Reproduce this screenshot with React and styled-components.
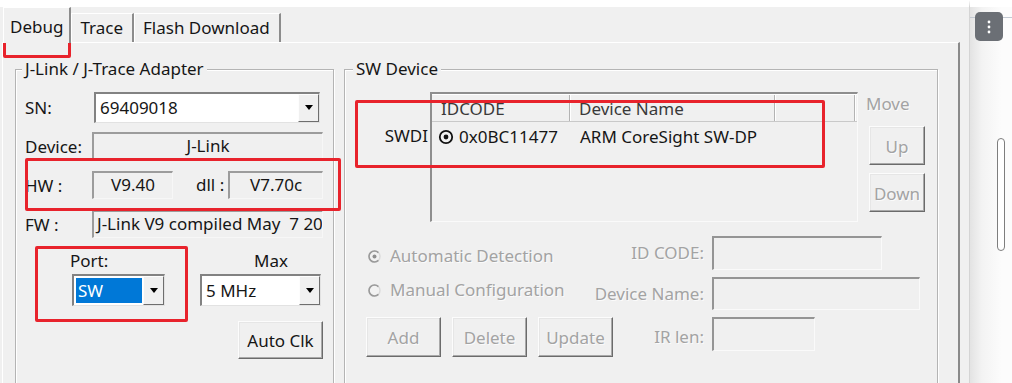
import React from 'react';
import styled, { createGlobalStyle } from 'styled-components';

const GlobalStyle = createGlobalStyle`
  html, body {
    margin: 0;
    padding: 0;
    background: #fff;
  }
  body {
    font-family: "Noto Sans", "Open Sans", "DejaVu Sans", sans-serif;
    font-size: 17px;
    color: #161616;
  }
  * { box-sizing: border-box; }
`;

const Screen = styled.div`
  position: relative;
  width: 1012px;
  height: 383px;
  display: flex;
  overflow: hidden;
  background: #fff;
`;

const Dialog = styled.div`
  width: 969px;
  flex: none;
  display: flex;
  flex-direction: column;
  border-top: 7px solid #fff;
  background: #f0f0f0;
`;

const TabBar = styled.div`
  display: flex;
  align-items: flex-end;
  height: 36px;
  padding-left: 3px;
`;

const Tab = styled.div`
  position: relative;
  z-index: ${p => (p.$active ? 2 : 1)};
  height: ${p => (p.$active ? 36 : 29)}px;
  margin-bottom: ${p => (p.$active ? -1 : 0)}px;
  padding: ${p => (p.$active ? '0 6px 6px 6px' : '0 9px 4px 8px')};
  display: flex;
  align-items: flex-end;
  line-height: 20px;
  background: #f0f0f0;
  border-top: 1px solid #fff;
  border-left: 1px solid #fff;
  border-right: 2px solid #8c8c8c;
`;

const TabPage = styled.div`
  flex: 1;
  margin: 0 9px 0 2px;
  border-top: 1px solid #fff;
  border-left: 1px solid #fff;
  border-right: 2px solid #8a8a8a;
  padding: 17px 0 0 12px;
  display: flex;
  gap: 10px;
  align-items: flex-start;
`;

const Group = styled.fieldset`
  width: ${p => p.$w}px;
  height: 340px;
  margin: 0;
  padding: 0;
  min-width: 0;
  border: 1px solid #b4b4b4;
  box-shadow: inset 1px 1px #fff, 1px 1px #fff;
`;

const GroupTitle = styled.legend`
  margin-left: ${p => p.$indent}px;
  padding: 0 3px;
  line-height: 18px;
  background: #f0f0f0;
`;

const GroupBody = styled.div`
  padding: 14px 10px 0 9px;
`;

const FieldGrid = styled.div`
  display: grid;
  grid-template-columns: 67px 1fr;
  grid-auto-rows: 30px;
  row-gap: 9px;
  align-items: center;
`;

const Label = styled.span`
  line-height: 20px;
  white-space: nowrap;
  color: ${p => (p.$disabled ? '#a3a3a3' : '#161616')};
  text-shadow: ${p => (p.$disabled ? '1px 1px #fbfbfb' : 'none')};
`;

const RowLabel = styled(Label)`
  padding-top: 2px;
`;

const InlineRow = styled.div`
  display: flex;
  align-items: center;
  height: 100%;
`;

const InlineLabel = styled(Label)`
  margin: 0 4px 0 ${p => p.$gap}px;
`;

const ReadOnly = styled.div`
  height: 28px;
  width: ${p => (p.$w ? `${p.$w}px` : 'auto')};
  flex: ${p => (p.$w ? 'none' : 1)};
  border-style: solid;
  border-width: 2px 1px 1px 2px;
  border-color: #9c9c9c #f7f7f7 #f7f7f7 #9c9c9c;
  padding: 0 3px;
  line-height: 24px;
  text-align: ${p => (p.$left ? 'left' : 'center')};
  white-space: pre;
  overflow: hidden;
`;

const Combo = styled.div`
  display: flex;
  width: ${p => p.$w}px;
  height: ${p => p.$h}px;
  margin-left: ${p => p.$ml || 0}px;
  background: #fff;
  border-style: solid;
  border-width: 2px 1px 1px 2px;
  border-color: #828282 #e2e2e2 #e2e2e2 #828282;
`;

const ComboText = styled.div`
  flex: 1;
  padding-left: 4px;
  display: flex;
  align-items: center;
`;

const ComboSelected = styled.div`
  flex: 1;
  margin: 2px 1px 2px 2px;
  padding-left: 2px;
  display: flex;
  align-items: center;
  background: #0078d7;
  color: #fff;
`;

const DropButton = styled.div`
  width: 21px;
  flex: none;
  display: flex;
  align-items: center;
  justify-content: center;
  background: #f0f0f0;
  border: 1px solid;
  border-color: #fdfdfd #6e6e6e #6e6e6e #fdfdfd;
  &::after {
    content: "";
    border-top: 5px solid #000;
    border-left: 4px solid transparent;
    border-right: 4px solid transparent;
  }
`;

const ClockRow = styled.div`
  display: flex;
  gap: 35px;
  margin: 12px 0 0 47px;
`;

const ClockCol = styled.div`
  display: flex;
  flex-direction: column;
  gap: 3px;
`;

const ClockLabel = styled(Label)`
  margin-left: ${p => p.$ml}px;
`;

const ButtonRow = styled.div`
  display: flex;
  justify-content: ${p => (p.$start ? 'flex-start' : 'flex-end')};
  gap: 11px;
  margin-top: ${p => p.$mt || 0}px;
`;

const Button = styled.div`
  width: ${p => p.$w}px;
  height: ${p => p.$h}px;
  flex: none;
  display: flex;
  align-items: center;
  justify-content: center;
  padding-top: 1px;
  background: #f0f0f0;
  border: 1px solid;
  border-color: #fcfcfc #6b6b6b #6b6b6b #fcfcfc;
  box-shadow: inset -1px -1px #a9a9a9, inset 1px 1px #e6e6e6;
  color: ${p => (p.$disabled ? '#a3a3a3' : '#161616')};
  text-shadow: ${p => (p.$disabled ? '1px 1px #fbfbfb' : 'none')};
  margin-top: ${p => p.$mt || 0}px;
  margin-left: ${p => p.$ml || 0}px;
`;

const DeviceTop = styled.div`
  display: flex;
  align-items: flex-start;
`;

const ScanLabel = styled(Label)`
  width: 76px;
  flex: none;
  text-align: right;
  padding-right: 2px;
  margin-top: 34px;
`;

const ListView = styled.div`
  width: 428px;
  height: 130px;
  flex: none;
  border-style: solid;
  border-width: 2px 1px 1px 2px;
  border-color: #8e8e8e #fafafa #fafafa #8e8e8e;
`;

const HeaderRow = styled.div`
  display: flex;
  height: 28px;
  border-top: 1px solid #fff;
  border-bottom: 1px solid #c9c9c9;
`;

const HeaderCell = styled.div`
  width: ${p => p.$w}px;
  flex: none;
  padding-left: 9px;
  line-height: 28px;
  color: #3a3a3a;
  border-right: 1px solid #b3b3b3;
  box-shadow: 1px 0 #fff;
`;

const DataRow = styled.div`
  display: flex;
  margin-top: 3px;
  line-height: 24px;
`;

const DataCell = styled.div`
  width: ${p => p.$w}px;
  flex: none;
  display: flex;
  align-items: center;
  gap: 5px;
  padding-left: ${p => p.$pl}px;
`;

const MoveCol = styled.div`
  display: flex;
  flex-direction: column;
  margin-left: 8px;
  padding-top: 2px;
`;

const LowerGrid = styled.div`
  display: grid;
  grid-template-columns: 226px 120px auto;
  grid-template-rows: 34px 33px 40px;
  row-gap: 7px;
  margin: 14px 0 0 12px;
`;

const RadioLine = styled.div`
  display: flex;
  align-items: center;
  gap: 9px;
  align-self: start;
  margin: ${p => p.$mt}px 0 0 2px;
  line-height: 20px;
  white-space: nowrap;
  color: #a3a3a3;
  text-shadow: 1px 1px #fbfbfb;
`;

const FormLabel = styled(Label)`
  text-align: right;
  padding-right: 8px;
  align-self: center;
`;

const EditBox = styled.div`
  width: ${p => p.$w}px;
  height: ${p => p.$h}px;
  align-self: start;
  border-style: solid;
  border-width: 2px 1px 1px 2px;
  border-color: #959595 #fafafa #fafafa #959595;
`;

const SideStrip = styled.div`
  flex: 1;
  display: flex;
  flex-direction: column;
  border-top: 7px solid #fff;
  border-left: 1px solid #d4d4d4;
  background:
    linear-gradient(#c3cad3, #c3cad3) 0 10px / 100% 1px no-repeat,
    linear-gradient(to right, #e3e3e3, #f3f3f3 12px, #fcfcfc 32px);
`;

const MenuButton = styled.div`
  width: 28px;
  height: 29px;
  margin: 5px 0 0 5px;
  border-radius: 5px;
  background: #6b6f75;
  display: flex;
  align-items: center;
  justify-content: center;
`;

const ScrollThumb = styled.div`
  width: 8px;
  height: 113px;
  margin: 97px 0 0 27px;
  border: 1px solid #7e7e7e;
  border-radius: 4px;
  background: #fff;
`;

const Mark = styled.div`
  position: absolute;
  left: ${p => p.$x}px;
  top: ${p => p.$y}px;
  width: ${p => p.$w}px;
  height: ${p => p.$h}px;
  border: 3px solid #e8232c;
  border-radius: 2px;
  pointer-events: none;
`;

const TargetIcon = () => (
  <svg width="16" height="16" viewBox="0 0 16 16">
    <circle cx="8" cy="8" r="6.2" fill="none" stroke="#111" strokeWidth="1.8" />
    <circle cx="8" cy="8" r="2.4" fill="#111" />
  </svg>
);

const RadioIcon = ({ checked }) => (
  <svg width="13" height="13" viewBox="0 0 13 13">
    <circle cx="6.5" cy="6.5" r="5.5" fill="#f2f2f2" stroke="#dadada" strokeWidth="1.4" />
    <path d="M10.4 2.6 A5.5 5.5 0 1 0 10.4 10.4" fill="none" stroke="#9a9a9a" strokeWidth="1.6" />
    {checked && <circle cx="6.5" cy="6.5" r="2" fill="#8f8f8f" />}
  </svg>
);

const Dots = () => (
  <svg width="4" height="14" viewBox="0 0 4 14">
    <circle cx="2" cy="2" r="1.4" fill="#fff" />
    <circle cx="2" cy="7" r="1.4" fill="#fff" />
    <circle cx="2" cy="12" r="1.4" fill="#fff" />
  </svg>
);

const AdapterGroup = () => (
  <Group $w={319}>
    <GroupTitle $indent={6}>J-Link / J-Trace Adapter</GroupTitle>
    <GroupBody>
      <FieldGrid>
        <RowLabel>SN:</RowLabel>
        <Combo $w={226} $h={31} $ml={2}>
          <ComboText>69409018</ComboText>
          <DropButton />
        </Combo>

        <RowLabel>Device:</RowLabel>
        <ReadOnly>J-Link</ReadOnly>

        <RowLabel>HW :</RowLabel>
        <InlineRow>
          <ReadOnly $w={81}>V9.40</ReadOnly>
          <InlineLabel $gap={23}>dll :</InlineLabel>
          <ReadOnly>V7.70c</ReadOnly>
        </InlineRow>

        <RowLabel>FW :</RowLabel>
        <ReadOnly $left>J-Link V9 compiled May  7 2021 10:12:36</ReadOnly>
      </FieldGrid>

      <ClockRow>
        <ClockCol>
          <ClockLabel $ml={-2}>Port:</ClockLabel>
          <Combo $w={93} $h={32}>
            <ComboSelected>SW</ComboSelected>
            <DropButton />
          </Combo>
        </ClockCol>
        <ClockCol>
          <ClockLabel $ml={54}>Max</ClockLabel>
          <Combo $w={121} $h={32}>
            <ComboText>5 MHz</ComboText>
            <DropButton />
          </Combo>
        </ClockCol>
      </ClockRow>

      <ButtonRow $mt={15}>
        <Button $w={85} $h={38}>Auto Clk</Button>
      </ButtonRow>
    </GroupBody>
  </Group>
);

const SwDeviceGroup = () => (
  <Group $w={594}>
    <GroupTitle $indent={8}>SW Device</GroupTitle>
    <GroupBody>
      <DeviceTop>
        <ScanLabel>SWDI</ScanLabel>
        <ListView>
          <HeaderRow>
            <HeaderCell $w={138}>IDCODE</HeaderCell>
            <HeaderCell $w={205}>Device Name</HeaderCell>
            <HeaderCell $w={80} />
          </HeaderRow>
          <DataRow>
            <DataCell $w={139} $pl={6}>
              <TargetIcon />
              0x0BC11477
            </DataCell>
            <DataCell $w={250} $pl={9}>ARM CoreSight SW-DP</DataCell>
          </DataRow>
        </ListView>
        <MoveCol>
          <Label $disabled>Move</Label>
          <Button $w={56} $h={39} $mt={12} $ml={3} $disabled>Up</Button>
          <Button $w={56} $h={39} $mt={8} $ml={3} $disabled>Down</Button>
        </MoveCol>
      </DeviceTop>

      <LowerGrid>
        <RadioLine $mt={10}>
          <RadioIcon checked />
          Automatic Detection
        </RadioLine>
        <FormLabel $disabled>ID CODE:</FormLabel>
        <EditBox $w={170} $h={34} />

        <RadioLine $mt={3}>
          <RadioIcon />
          Manual Configuration
        </RadioLine>
        <FormLabel $disabled>Device Name:</FormLabel>
        <EditBox $w={208} $h={33} />

        <ButtonRow $start>
          <Button $w={75} $h={40} $disabled>Add</Button>
          <Button $w={75} $h={40} $disabled>Delete</Button>
          <Button $w={75} $h={40} $disabled>Update</Button>
        </ButtonRow>
        <FormLabel $disabled>IR len:</FormLabel>
        <EditBox $w={103} $h={34} />
      </LowerGrid>
    </GroupBody>
  </Group>
);

export default function App() {
  return (
    <>
      <GlobalStyle />
      <Screen>
        <Dialog>
          <TabBar>
            <Tab $active>Debug</Tab>
            <Tab>Trace</Tab>
            <Tab>Flash Download</Tab>
          </TabBar>
          <TabPage>
            <AdapterGroup />
            <SwDeviceGroup />
          </TabPage>
        </Dialog>
        <SideStrip>
          <MenuButton>
            <Dots />
          </MenuButton>
          <ScrollThumb />
        </SideStrip>

        <Mark $x={3} $y={7} $w={68} $h={51} />
        <Mark $x={25} $y={158} $w={316} $h={53} />
        <Mark $x={35} $y={246} $w={153} $h={76} />
        <Mark $x={355} $y={100} $w={470} $h={68} />
      </Screen>
    </>
  );
}
